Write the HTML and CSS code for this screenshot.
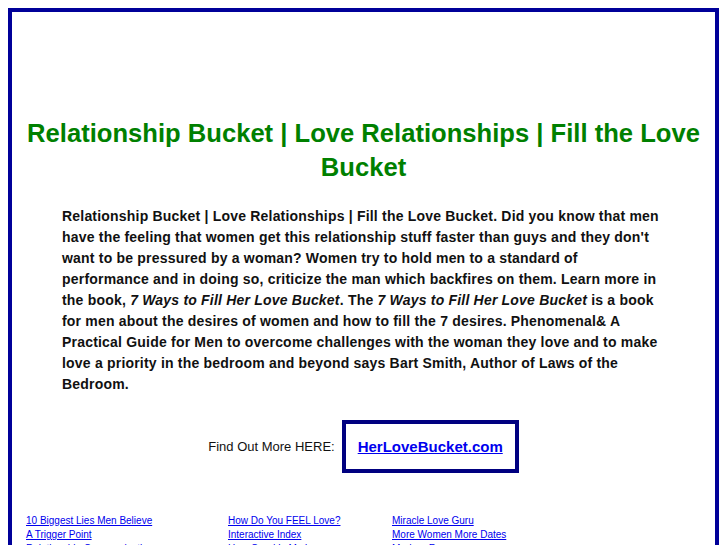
FILE: index.html
```html
<!DOCTYPE html>
<html>
<head>
<meta charset="utf-8">
<link rel="stylesheet" href="styles.css">
</head>
<body>
<div class="frame">
  <h1 class="title">Relationship Bucket | Love Relationships | Fill the Love Bucket</h1>
  <p class="intro">Relationship Bucket | Love Relationships | Fill the Love Bucket. Did you know that men have the feeling that women get this relationship stuff faster than guys and they don't want to be pressured by a woman? Women try to hold men to a standard of performance and in doing so, criticize the man which backfires on them. Learn more in the book, <em>7 Ways to Fill Her Love Bucket</em>. The <em>7 Ways to Fill Her Love Bucket</em> is a book for men about the desires of women and how to fill the 7 desires. Phenomenal&amp; A Practical Guide for Men to overcome challenges with the woman they love and to make love a priority in the bedroom and beyond says Bart Smith, Author of Laws of the Bedroom.</p>
  <div class="cta">
    <span class="cta-label">Find Out More HERE:</span>
    <div class="cta-box"><a href="#">HerLoveBucket.com</a></div>
  </div>
  <div class="links">
    <a href="#">10 Biggest Lies Men Believe</a>
    <a href="#">How Do You FEEL Love?</a>
    <a href="#">Miracle Love Guru</a>
    <a href="#">A Trigger Point</a>
    <a href="#">Interactive Index</a>
    <a href="#">More Women More Dates</a>
    <a href="#">Relationship Communication</a>
    <a href="#">How Good Is My Love</a>
    <a href="#">Modern Romance</a>
  </div>
</div>
</body>
</html>
```
FILE: styles.css
```css
html, body {
  margin: 0;
  padding: 0;
  background: #ffffff;
}
body {
  margin: 8px;
  font-family: "Liberation Sans", Arial, sans-serif;
}
.frame {
  border: 4px solid #000099;
  padding: 0 14px;
  min-height: 600px;
}
.title {
  margin: 104px -10px 0;
  font-size: 25.6px;
  line-height: 34px;
  font-weight: bold;
  color: #008000;
  text-align: center;
}
.intro {
  margin: 22px 38px 0 36px;
  font-size: 14px;
  line-height: 21px;
  font-weight: bold;
  letter-spacing: 0.2px;
  color: #111111;
}
.cta {
  display: flex;
  justify-content: center;
  align-items: center;
  gap: 7px;
  margin-top: 25px;
}
.cta-label {
  font-size: 13px;
  color: #111111;
}
.cta-box {
  border: 4px solid #000080;
  padding: 14px 12px 13px;
}
.cta-box a {
  font-size: 15px;
  font-weight: bold;
  color: #0000ee;
}
.links {
  display: grid;
  grid-template-columns: 202px 164px 200px;
  margin-top: 41px;
}
.links a {
  font-size: 10px;
  line-height: 14px;
  color: #0000ee;
  text-decoration: underline;
  white-space: nowrap;
}
```
